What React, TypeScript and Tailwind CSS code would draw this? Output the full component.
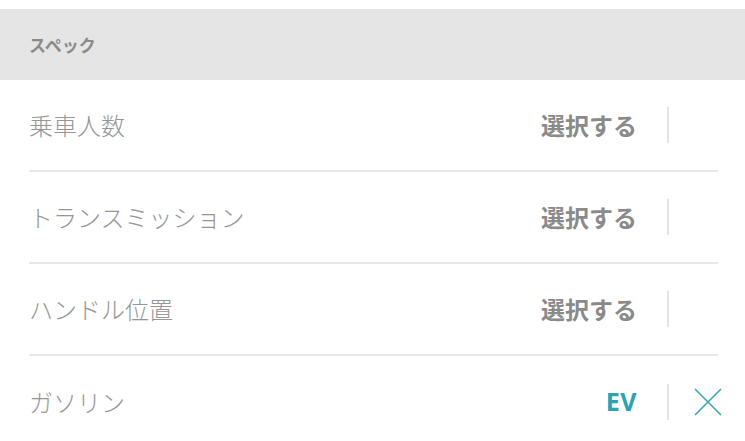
import React from 'react';

const rows = [
  { label: '乗車人数', value: '選択する', active: false },
  { label: 'トランスミッション', value: '選択する', active: false },
  { label: 'ハンドル位置', value: '選択する', active: false },
  { label: 'ガソリン', value: 'EV', active: true },
];

export default function App() {
  return (
    <div
      className="w-[745px] h-[441px] overflow-hidden bg-white pt-[9px]"
      style={{ fontFamily: '"Noto Sans CJK JP", "Noto Sans", sans-serif' }}
    >
      {/* Section header */}
      <div className="h-[71px] bg-[#e5e5e5] flex items-center px-[29px]">
        <span className="text-[17px] font-bold text-[#8a8a8a]">スペック</span>
      </div>

      {/* Spec rows */}
      <div className="ml-[29px] mr-[27px]">
        {rows.map((row, i) => (
          <div
            key={i}
            className={`h-[92px] flex items-center justify-between ${i < rows.length - 1 ? 'border-b-2 border-[#e8e8e8]' : ''}`}
          >
            <span className="text-[24px] font-light text-[#969696]">{row.label}</span>
            <div className="flex items-center -mr-[4px]">
              {row.active ? (
                <span
                  className="text-[25px] font-bold text-[#2ba3b2] tracking-[0.5px]"
                  style={{ fontFamily: '"Open Sans", sans-serif' }}
                >
                  {row.value}
                </span>
              ) : (
                <span className="text-[24px] font-bold text-[#8a8a8a]">{row.value}</span>
              )}
              <div className="ml-[30px] w-[2px] h-[36px] bg-[#e3e3e3]" />
              <div className="w-[53px] h-[28px] flex items-center justify-end">
                {row.active && (
                  <svg width="28" height="28" viewBox="0 0 28 28" fill="none">
                    <path d="M1 1L27 27M27 1L1 27" stroke="#3aa6b4" strokeWidth="1.6" />
                  </svg>
                )}
              </div>
            </div>
          </div>
        ))}
      </div>
    </div>
  );
}
